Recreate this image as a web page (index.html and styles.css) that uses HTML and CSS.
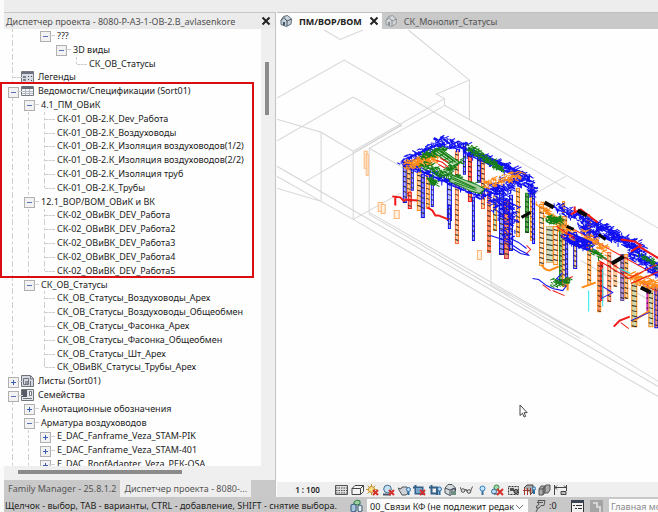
FILE: index.html
```html
<!DOCTYPE html>
<html lang="ru">
<head>
  <meta charset="UTF-8" />
  <meta name="viewport" content="width=device-width, initial-scale=1" />
  <title>Диспетчер проекта</title>
  <link rel="stylesheet" href="styles.css">
</head>
<body>
  <div class="ribbon"></div>

  <div class="workspace">
    <aside class="browser">
      <header class="panel-title">
        <h1>Диспетчер проекта - 8080-Р-АЗ-1-ОВ-2.В_avlasenkore</h1>
        <button class="close" aria-label="Закрыть панель"><svg viewBox="0 0 10 10"><path d="M1.5 1.5l7 7M8.500 1.500l-7 7"/></svg></button>
      </header>

      <div class="panel-body">
        <div class="tree-view">
          <ul class="tree">
            <li><i class="v"></i><i></i><button class="box minus" aria-label="Свернуть"></button><span>???</span></li>
            <li><i class="v"></i><i></i><i></i><button class="box minus" aria-label="Свернуть"></button><span>3D виды</span></li>
            <li><i class="v"></i><i></i><i></i><i></i><i class="end"></i><span>СК_ОВ_Статусы</span></li>
            <li><i class="tee"></i><svg class="kind" viewBox="0 0 13 12"><path d="M.5.5h12v11H.5z" fill="#d9dce2" stroke="#777b83"/><path d="M1 1h11v2H1z" fill="#6d7280"/><path d="M2 5h3v2H2zM2 8h3v2H2z" fill="#7b8290"/><path d="M7 5h1v1H7zM10 5h1v1h-1zM7 8h1v1H7zM10 9h1v1h-1z" fill="#454b5c"/></svg><span>Легенды</span></li>
            <li class="marked">
              <ul>
                <li><button class="box minus" aria-label="Свернуть"></button><svg class="kind" viewBox="0 0 13 12"><path d="M.5 1.500h12v9H.5z" fill="#f6f6f8" stroke="#777b83"/><path d="M1 1h11v3H1z" fill="#666b78"/><path d="M4.500 4v6M8.500 4v6M1 6.500h11M1 8.500h11" stroke="#b4b8c2" fill="none"/></svg><span>Ведомости/Спецификации (Sort01)</span></li>
                <li><i class="v"></i><button class="box minus" aria-label="Свернуть"></button><span>4.1_ПМ_ОВиК</span></li>
                <li><i class="v"></i><i class="v"></i><i class="tee"></i><span>СК-01_ОВ-2.К_Dev_Работа</span></li>
                <li><i class="v"></i><i class="v"></i><i class="tee"></i><span>СК-01_ОВ-2.К_Воздуховоды</span></li>
                <li><i class="v"></i><i class="v"></i><i class="tee"></i><span>СК-01_ОВ-2.К_Изоляция воздуховодов(1/2)</span></li>
                <li><i class="v"></i><i class="v"></i><i class="tee"></i><span>СК-01_ОВ-2.К_Изоляция воздуховодов(2/2)</span></li>
                <li><i class="v"></i><i class="v"></i><i class="tee"></i><span>СК-01_ОВ-2.К_Изоляция труб</span></li>
                <li><i class="v"></i><i class="v"></i><i class="end"></i><span>СК-01_ОВ-2.К_Трубы</span></li>
                <li><i class="v"></i><button class="box minus" aria-label="Свернуть"></button><span>12.1_ВОР/ВОМ_ОВиК и ВК</span></li>
                <li><i class="v"></i><i class="v"></i><i class="tee"></i><span>СК-02_ОВиВК_DEV_Работа</span></li>
                <li><i class="v"></i><i class="v"></i><i class="tee"></i><span>СК-02_ОВиВК_DEV_Работа2</span></li>
                <li><i class="v"></i><i class="v"></i><i class="tee"></i><span>СК-02_ОВиВК_DEV_Работа3</span></li>
                <li><i class="v"></i><i class="v"></i><i class="tee"></i><span>СК-02_ОВиВК_DEV_Работа4</span></li>
                <li><i class="v"></i><i class="v"></i><i class="end"></i><span>СК-02_ОВиВК_DEV_Работа5</span></li>
              </ul>
            </li>
            <li><i class="v"></i><button class="box minus" aria-label="Свернуть"></button><span>СК_ОВ_Статусы</span></li>
            <li><i class="v"></i><i></i><i class="tee"></i><span>СК_ОВ_Статусы_Воздуховоды_Арех</span></li>
            <li><i class="v"></i><i></i><i class="tee"></i><span>СК_ОВ_Статусы_Воздуховоды_Общеобмен</span></li>
            <li><i class="v"></i><i></i><i class="tee"></i><span>СК_ОВ_Статусы_Фасонка_Арех</span></li>
            <li><i class="v"></i><i></i><i class="tee"></i><span>СК_ОВ_Статусы_Фасонка_Общеобмен</span></li>
            <li><i class="v"></i><i></i><i class="tee"></i><span>СК_ОВ_Статусы_Шт_Арех</span></li>
            <li><i class="v"></i><i></i><i class="end"></i><span>СК_ОВиВК_Статусы_Трубы_Арех</span></li>
            <li><button class="box plus" aria-label="Развернуть"></button><svg class="kind" viewBox="0 0 13 12"><path d="M.5.5h9l3 3v8H.5z" fill="#d5d8de" stroke="#70747d"/><path d="M2.500 3.500h5v6h-5zM9.500 1v3h3M9.500 6v5" fill="none" stroke="#70747d"/><path d="M4 6h3v3H4z" fill="#8d929e"/></svg><span>Листы (Sort01)</span></li>
            <li><button class="box minus" aria-label="Свернуть"></button><svg class="kind" viewBox="0 0 13 12"><path d="M.5.5h12v11H.5z" fill="#e4e5e9" stroke="#70747d"/><path d="M1 1h5v7H1z" fill="#555a66"/><path d="M8.500 2.500h2v4h-2zM2 9.500h9" fill="#fff" stroke="#70747d"/></svg><span>Семейства</span></li>
            <li><i class="v"></i><button class="box plus" aria-label="Развернуть"></button><span>Аннотационные обозначения</span></li>
            <li><i class="v"></i><button class="box minus" aria-label="Свернуть"></button><span>Арматура воздуховодов</span></li>
            <li><i class="v"></i><i class="v"></i><button class="box plus" aria-label="Развернуть"></button><span>E_DAC_Fanframe_Veza_STAM-PIK</span></li>
            <li><i class="v"></i><i class="v"></i><button class="box plus" aria-label="Развернуть"></button><span>E_DAC_Fanframe_Veza_STAM-401</span></li>
            <li><i class="v"></i><i class="v"></i><button class="box plus" aria-label="Развернуть"></button><span>E_DAC_RoofAdapter_Veza_РЕК-OSA</span></li>
          </ul>
        </div>
        <div class="scroll-y"><div class="thumb"></div></div>
      </div>
      <div class="scroll-x"><div class="thumb"></div></div>

      <nav class="panel-tabs">
        <button>Family Manager - 25.8.1.2</button>
        <button class="active">Диспетчер проекта - 8080-...</button>
      </nav>
    </aside>

    <main class="views">
      <nav class="view-tabs">
        <div class="view-tab active">
          <svg class="home" viewBox="0 0 12 12"><path d="M1 5.500L3.500 1.500 7.500.5l4 3.500-.5 5-4.500 2.500L1 9.500z" fill="#c9d3dc" stroke="#5a6a78"/><path d="M1 5.500l3-3 3 3.500 4.500-2M7 6v5" fill="none" stroke="#46545f"/><path d="M3 7h2v3.500l-2-.8z" fill="#3f5568"/></svg>
          <button>ПМ/ВОР/ВОМ</button>
          <button class="close" aria-label="Закрыть вид"><svg viewBox="0 0 10 10"><path d="M1.500 1.500l7 7M8.500 1.500l-7 7"/></svg></button>
        </div>
        <div class="view-tab">
          <svg class="home faded" viewBox="0 0 12 12"><path d="M1 5.500L3.500 1.500 7.500.5l4 3.500-.5 5-4.500 2.500L1 9.500z" fill="#dde1e5" stroke="#5a6a78"/><path d="M1 5.500l3-3 3 3.500 4.500-2M7 6v5" fill="none" stroke="#46545f"/><path d="M3 7h2v3.500l-2-.8z" fill="#3f5568"/></svg>
          <button>СК_Монолит_Статусы</button>
        </div>
      </nav>

      <div class="canvas">
        <svg id="model" viewBox="277 29 381 452" preserveAspectRatio="xMinYMin slice">
          <g class="outline">
            <path d="M324 30l16 9.500L363 30M277 98l67-38 221 128M408 30l61 50v39M469 80l-33 14 8 4.500v6.500l214 123"/>
            <path d="M444 98.500L353 151M445 105l-76 43v66M401 125l-97 57M277 140.500L353 97l48 27.500v2"/>
            <path d="M277 119l44 13v69l-44-13M321 132l32 19v68M277 166l381 220M277 176l76 43 305 177M353 219l47-26M369 148l40 23"/>
            <path d="M369 212l213 122 76 47M369 214l211 124M490.500 250v34l92 51M565 176l-30 17M401 125l-48 28M580 260l78 45"/>
          </g>
        </svg>
        <svg class="cursor" viewBox="0 0 9 14"><path d="M1 1v10.500l2.400-2.200 1.700 3.700 1.600-.7L5 8.700h3.200z"/></svg>
      </div>

      <div class="view-controls">
        <button class="scale">1 : 100</button>
        <div class="icons">
          <button aria-label="Уровень детализации"><svg viewBox="0 0 13 12"><path d="M.5 1.500h12v9H.5z" fill="#ddd" stroke="#555"/><path d="M1 4h11M1 6.500h11M1 9h11" stroke="#555" stroke-dasharray="1.500 1" fill="none"/></svg></button>
          <button aria-label="Визуальный стиль"><svg viewBox="0 0 13 12"><path d="M1 4.500L4 1.500h8.500v6l-3 3H1z" fill="#f4f4f4" stroke="#444"/><path d="M1 4.500h8.500v6M9.500 4.500l3-3" fill="none" stroke="#444"/></svg></button>
          <button aria-label="Траектория солнца"><svg viewBox="0 0 13 12"><path d="M5.500 0v11M0 5.500h11M1.600 1.600l8 8M9.400 1.600l-8 8" stroke="#c9962e"/><circle cx="5.500" cy="5.500" r="3" fill="#ffe08a" stroke="#b98522"/><path class="off" d="M7 6l5 5M12 6l-5 5"/></svg></button>
          <button aria-label="Тени"><svg viewBox="0 0 13 12"><path d="M1 10.500h8" stroke="#456" stroke-width="2"/><circle cx="5.500" cy="5" r="3.800" fill="#c6e1f2" stroke="#3b6f96"/><path class="off" d="M7 6l5 5M12 6l-5 5"/></svg></button>
          <button aria-label="Визуализация"><svg viewBox="0 0 13 12"><path d="M0 4l3 1 1-2h5l1 2v4l-2 2H4L1 6z" fill="#ccd2d6" stroke="#555"/><circle cx="10.500" cy="5.500" r="2" fill="#b9dcf5" stroke="#2c6ca5"/><path d="M10.500 8v3" stroke="#2c6ca5" stroke-width="2"/></svg></button>
          <button aria-label="Обрезать вид"><svg viewBox="0 0 13 12"><path d="M0 3.500h9.500V11M2.500 1v8.500H12" fill="none" stroke="#345f86" stroke-width="2"/><path d="M3 4h6v5H3z" fill="#77a7cd"/><path class="off" d="M7 6l5 5M12 6l-5 5"/></svg></button>
          <button aria-label="Показать область подрезки"><svg viewBox="0 0 13 12"><path d="M0 3.500h8V11M2.500 1v8.500H8" fill="none" stroke="#345f86" stroke-width="2"/><circle cx="10.500" cy="5" r="2" fill="#b9dcf5" stroke="#2c6ca5"/><path d="M10.500 7v4" stroke="#2c6ca5" stroke-width="2"/></svg></button>
          <button aria-label="Заблокировать 3D вид"><svg viewBox="0 0 13 12"><path d="M1 4l3-3.500h4L11.500 4v4L6 11.500 1 9z" fill="#d4dadd" stroke="#4b575e"/><path d="M1 4l5 2 5-2M6 6v5" fill="none" stroke="#4b575e"/><path d="M7 7h5v4H7z" fill="#6f8d80"/><path d="M8 7V5h3v2" fill="none" stroke="#445"/></svg></button>
          <button aria-label="Временное скрытие"><svg viewBox="0 0 13 12"><path d="M0 3l2 4.500h2.500L6 5l1.500 3.500H10l2.500-6" fill="none" stroke="#555"/><circle cx="3" cy="6.500" r="1.800" fill="#ddd" stroke="#555"/><circle cx="9" cy="7.500" r="1.800" fill="#ddd" stroke="#555"/></svg></button>
          <button aria-label="Показать скрытые элементы"><svg viewBox="0 0 13 12"><circle cx="6.500" cy="4.500" r="2.500" fill="#c7e5fa" stroke="#2c7bbd"/><path d="M6.500 7v4" stroke="#3e6c96" stroke-width="2"/></svg></button>
          <button aria-label="Свойства временного вида"><svg viewBox="0 0 13 12"><circle cx="5.500" cy="3.500" r="2.500" fill="#a8d8b0" stroke="#2d8a43"/><circle cx="3" cy="7.500" r="2.500" fill="#bcd9ee" stroke="#2e6d9c"/><path d="M3 10h5" stroke="#345"/><path class="off" d="M6 5l6 6M12 5l-6 6"/></svg></button>
          <button aria-label="Аналитическая модель"><svg viewBox="0 0 13 12"><path d="M1.500 2.500h10v8h-10z" fill="#ddd" stroke="#333" stroke-dasharray="2 1"/><path d="M3 4h4v3H3z" fill="#555"/><circle cx="9" cy="7.500" r="2" fill="#888" stroke="#222"/></svg></button>
          <button aria-label="Наборы смещения"><svg viewBox="0 0 13 12"><path d="M1 4l3-3h6v7l-2 2" fill="#aaa" stroke="#444"/><path d="M1.500 4v7M4.500 4v7M7.500 4v7M0 6.500h8" stroke="#a13b32"/><circle cx="11" cy="4.500" r="1.600" fill="#b9dcf5" stroke="#2c6ca5"/><path d="M11 6v4" stroke="#2c6ca5" stroke-width="2"/></svg></button>
          <button aria-label="Зависимости"><svg viewBox="0 0 13 12"><path d="M1 5l2-3h4v6l-2 3H1zM6 3l2-2h4v5l-2 3H6z" fill="#ababab" stroke="#555"/><path d="M1 5h4v6M5 5l2-3" fill="none" stroke="#555"/></svg></button>
          <button aria-label="Размеры"><svg viewBox="0 0 13 12"><path d="M.5 1v10M12.500 1v6M0 3.500h13M1 3.500l2-2M1 3.500l2 2M12 3.500l-2-2" fill="none" stroke="#444"/><path d="M7 7.500h5v3H7z" fill="#bbb" stroke="#444"/></svg></button>
        </div>
      </div>
    </main>
  </div>

  <footer class="status">
    <p>Щелчок - выбор, TAB - варианты, CTRL - добавление, SHIFT - снятие выбора.</p>
    <svg class="sets" viewBox="0 0 13 14"><path d="M4 3l3-2 3 1v3l-3 1-3-1z" fill="#9ed0a4" stroke="#2f7d42"/><path d="M1 6l3-1 2 1v6l-3 1-2-1z" fill="#a7c4dc" stroke="#33597a"/><path d="M8 7l2-1 2 1v5l-2 1-2-1z" fill="#e6ecf0" stroke="#33597a"/></svg>
    <select class="workset" aria-label="Рабочий набор"><option>00_Связи КФ (не подлежит редак</option></select>
    <svg class="edit" viewBox="0 0 13 14"><path d="M4 1.500h7l-1 5H7L5 9H2.500v-2L5 5.500zM4 9l-2 4M3 3.500h6" fill="none" stroke="#555"/></svg>
    <span class="count">:0</span>
    <svg class="list" viewBox="0 0 13 14"><path d="M.5 1.500h12v12H.5z" fill="#f2f2f2" stroke="#333"/><path d="M0 1h13v3H0z" fill="#3a4450"/><path d="M2 6.500h2M5 6.500h6M4 9.500h2M7 9.500h4" stroke="#333"/></svg>
    <svg class="list pale" viewBox="0 0 13 14"><path d="M0 1h13v13H0z" fill="#a5a5a5"/><path d="M3 4h4v4h3v5" fill="none" stroke="#d6d6d6" stroke-width="2"/></svg>
    <input class="option" type="text" value="Главная модель" aria-label="Вариант конструкции" disabled>
  </footer>

  <script src="script.js"></script>
</body>
</html>
```
FILE: styles.css
```css
* {
  box-sizing: border-box;
}
body {
  margin: 0;
  height: 100vh;
  overflow: hidden;
  display: grid;
  grid-template-rows: 12px 1fr 15px;
  background: #fbfbfb;
  font-family: "Noto Sans", "Open Sans", sans-serif;
  font-size: 9px;
  color: #222;
}
button,
select,
input {
  font: inherit;
  color: inherit;
  border: 0;
  padding: 0;
  background: none;
}
ul {
  list-style: none;
  margin: 0;
  padding: 0;
}
svg {
  display: block;
  flex: none;
}

.ribbon {
  margin-left: 4px;
  background: #ededed;
}
.workspace {
  display: grid;
  grid-template-columns: 276px minmax(0, 1fr);
  min-height: 0;
}

/* project browser */
.browser {
  display: grid;
  grid-template-columns: minmax(0, 1fr);
  grid-template-rows: 17px 1fr 14px 17px;
  min-height: 0;
  border-right: 1px solid #c4c4c4;
}
.panel-title {
  display: flex;
  align-items: center;
  justify-content: space-between;
  margin-left: 4px;
  padding: 0 4px 0 2px;
  background: #ebebeb;
  border-top: 1px solid #c8c8c8;
}
.panel-title h1 {
  margin: 0;
  font-size: 9px;
  font-weight: 400;
  color: #505050;
  white-space: nowrap;
}
.close {
  flex: none;
  width: 10px;
  height: 10px;
}
.close path {
  fill: none;
  stroke: #222;
  stroke-width: 2;
}
.panel-body {
  display: grid;
  grid-template-columns: minmax(0, 1fr) 14px;
  min-height: 0;
}
.tree-view {
  overflow: hidden;
  background: #fefefe;
}
.tree {
  display: flex;
  flex-direction: column;
  height: calc(100% + 5px);
}
.tree li {
  flex: 1;
  min-height: 0;
  display: flex;
  align-items: center;
  padding-left: 4px;
  white-space: nowrap;
}
.tree li span {
  margin-left: 5px;
  line-height: 14px;
}
.tree .marked {
  flex: 14;
  position: relative;
  display: block;
  padding: 0;
}
.marked ul {
  display: flex;
  flex-direction: column;
  height: 100%;
}
.marked::after {
  content: "";
  position: absolute;
  inset: -2px 7px 0 0;
  border: 2px solid #d90e12;
  pointer-events: none;
}
.tree i,
.box {
  position: relative;
  width: 16px;
  flex: none;
}
.tree i {
  align-self: stretch;
}
.v::before,
.tee::before,
.end::before {
  content: "";
  position: absolute;
  left: 8px;
  top: 0;
  bottom: 0;
  border-left: 1px dashed #cfcfcf;
}
.end::before {
  bottom: 50%;
}
.tee::after,
.end::after,
.box::after {
  content: "";
  position: absolute;
  left: 9px;
  right: -3px;
  top: 50%;
  border-top: 1px dashed #cfcfcf;
}
.box {
  height: 9px;
}
.box::after {
  left: 13px;
  top: 4px;
}
.box::before {
  content: "";
  position: absolute;
  left: 4px;
  top: 0;
  width: 9px;
  height: 9px;
  border: 1px solid #b0b0b0;
  background: linear-gradient(#5873b5, #5873b5) center / 5px 1px no-repeat, #f2f2f2;
}
.plus::before {
  background: linear-gradient(#3f5db0, #3f5db0) center / 5px 1px no-repeat,
    linear-gradient(#3f5db0, #3f5db0) center / 1px 5px no-repeat, #f2f2f2;
}
.kind {
  width: 13px;
  height: 12px;
  margin-left: 1px;
}
.tree .kind + span {
  margin-left: 4px;
}
.scroll-y,
.scroll-x {
  background: #efefef;
}
.scroll-y .thumb {
  width: 4px;
  height: 53px;
  margin: 33px 0 0 4px;
  background: #8b8b8b;
}
.scroll-x {
  margin-left: 4px;
}
.scroll-x .thumb {
  width: 164px;
  height: 4px;
  margin: 4px 0 0 14px;
  background: #8b8b8b;
}
.panel-tabs {
  display: flex;
  margin-left: 4px;
  background: #c9c9c9;
}
.panel-tabs button {
  padding: 0 4px;
  color: #555;
  white-space: nowrap;
}
.panel-tabs .active {
  background: #eee;
}

/* view area */
.views {
  display: grid;
  grid-template-columns: minmax(0, 1fr);
  grid-template-rows: 17px 1fr 15px;
  min-height: 0;
  padding-left: 1px;
}
.view-tabs {
  display: flex;
  background: #c9c9c9;
  border-top: 1px solid #c0c0c0;
}
.view-tab {
  display: flex;
  align-items: center;
  gap: 7px;
  padding: 0 3px;
  color: #555;
}
.view-tab.active {
  background: #fdfdfd;
  color: #222;
  font-weight: 700;
}
.home {
  width: 12px;
  height: 12px;
}
.faded {
  opacity: .5;
}
.canvas {
  position: relative;
  overflow: hidden;
  background: #fefefe;
}
#model {
  width: 100%;
  height: 100%;
}
.outline {
  fill: none;
  stroke: #d6d6d6;
  stroke-width: 1;
}
.cursor {
  position: absolute;
  left: 242px;
  top: 375px;
  width: 9px;
  height: 14px;
  fill: #fff;
  stroke: #444;
}
.view-controls {
  display: flex;
  align-items: center;
  background: #efefef;
}
.scale {
  width: 58px;
  padding-left: 3px;
  font-size: 8px;
  font-weight: 600;
}
.icons {
  display: flex;
  justify-content: space-between;
  width: 232px;
}
.icons svg {
  width: 13px;
  height: 12px;
}
.off {
  stroke: #d3302b;
  stroke-width: 2;
}

/* status bar */
.status {
  display: flex;
  align-items: flex-start;
  overflow: hidden;
  margin-left: 4px;
  padding-top: 2px;
  background: #c8c8c8;
  line-height: 14px;
  white-space: nowrap;
}
.status p {
  flex: none;
  width: 346px;
  margin: 0;
  padding-left: 1px;
}
.status svg {
  width: 13px;
  height: 14px;
}
.workset {
  flex: none;
  width: 161px;
  height: 15px;
  margin: 0 6px 0 4px;
  padding: 0 12px 0 3px;
  appearance: none;
  background: linear-gradient(45deg, transparent 46%, #777 46% 58%, transparent 58%) 149px 6px / 4px 4px no-repeat,
    linear-gradient(-45deg, transparent 46%, #777 46% 58%, transparent 58%) 152px 6px / 4px 4px no-repeat, #fcfcfc;
}
.count {
  flex: none;
  width: 22px;
  margin-left: 2px;
}
.status .list {
  margin-right: 6px;
}
.option {
  flex: 1;
  min-width: 0;
  height: 15px;
  padding-left: 2px;
  background: #fcfcfc;
  color: #8a8a8a;
}
```
FILE: script.js
```js
const svg = document.getElementById("model");
const blue = "#1010f0", green = "#168016", orange = "#ff8c1a", red = "#f01818", peach = "#ffd0a0", cyan = "#20e8f0";

let seed = 7;
function rnd() {
  seed = (seed * 16807) % 2147483647;
  return seed / 2147483647;
}

function line(d, color, width, fill) {
  const p = document.createElementNS("http://www.w3.org/2000/svg", "path");
  p.setAttribute("d", d);
  p.setAttribute("stroke", color);
  p.setAttribute("stroke-width", width || 1);
  p.setAttribute("fill", fill || "none");
  svg.appendChild(p);
}

// vertical duct with flange marks
function riser(x, top, bottom, w, fill, edge) {
  line(`M${x} ${top}h${w}V${bottom}h${-w}z`, edge, 1, fill);
  let marks = "";
  for (let y = top + 3; y < bottom; y += 5) marks += `M${x} ${y}l${w} 1`;
  line(marks, "#222", 1);
}

// run of small axonometric fittings between two points
function run(x1, y1, x2, y2, spread, count, color, width) {
  let d = "";
  for (let n = 0; n < count; n++) {
    const t = n / count;
    const x = x1 + (x2 - x1) * t + (rnd() - .5) * spread - 1;
    const y = y1 + (y2 - y1) * t + (rnd() - .5) * spread;
    const l = 2 + rnd() * 3;
    const k = Math.floor(rnd() * 5);
    const dx = k === 3 ? 0 : l, dy = k === 3 ? l * .8 : k === 2 ? -l * .5 : l * .5;
    d += `M${x.toFixed(1)} ${y.toFixed(1)}l${dx.toFixed(1)} ${dy.toFixed(1)}`;
  }
  line(d, color, width);
}

// free standing shafts
[[364, 151, 3, 17], [366, 154, 2, 21], [378, 202, 4, 9], [381, 204, 4, 9], [394, 210, 5, 8], [477, 250, 4, 9]]
  .forEach(([x, y, w, h]) => line(`M${x} ${y}h${w}v${h}h${-w}z`, "#ffb778", 1, "#fff0e0"));

// x, top, bottom, width, fill, edge
[
  [403, 163, 202, 3, "#a9a9f5", blue], [407, 165, 196, 3, peach, orange], [411, 164, 190, 2, "#c9c9ff", blue],
  [408, 192, 208, 3, "#ffa080", red], [417, 172, 210, 4, peach, orange], [421, 174, 217, 3, "#8888ee", blue],
  [426, 175, 208, 3, peach, orange], [431, 176, 206, 2, "#ddf", blue], [447, 181, 220, 4, "#bbf", blue],
  [448, 205, 228, 2, "#bbf", blue], [455, 151, 243, 3, peach, "#f86a3c"], [463, 143, 174, 2, "#ccf", blue],
  [468, 153, 201, 3, "#ff9a70", red], [472, 197, 240, 2, "#aaf", blue], [477, 157, 182, 3, "#aaf", blue],
  [481, 160, 208, 3, peach, "#f86a3c"], [487, 192, 252, 3, "#ff9068", "#f86a3c"], [493, 196, 230, 3, "#cfe6bb", orange],
  [499, 190, 254, 4, "#99f", blue], [504, 200, 258, 4, "#ff9068", "#c03a60"], [509, 195, 250, 3, "#aaf", blue],
  [516, 188, 236, 3, peach, orange], [525, 193, 232, 3, "#62ad55", green], [530, 188, 240, 2, peach, orange],
  [532, 190, 243, 2, "#aaf", blue], [539, 204, 265, 4, "#ffe9d2", orange], [546, 226, 262, 6, "#cfe0c2", "#e0b070"],
  [553, 226, 264, 4, "#ffe9d2", orange], [559, 222, 284, 3, "#9bbf84", green], [562, 216, 286, 4, peach, orange],
  [565, 240, 280, 2, "#aaf", blue], [573, 232, 268, 3, peach, blue], [587, 216, 284, 3, peach, orange],
  [597, 262, 311, 3, "#ff9068", orange], [600, 262, 300, 2, "#ff5030", red], [607, 252, 301, 3, peach, "#f86a3c"],
  [613, 262, 286, 3, peach, "#ffb778"], [620, 254, 300, 3, "#b69ad0", "#6a4a9a"], [624, 254, 298, 3, peach, orange],
  [631, 282, 326, 5, "#cfd8a8", orange], [648, 284, 326, 4, "#cfe0c2", orange], [654, 286, 327, 3, "#ff9068", blue],
  [562, 201, 212, 2, peach, orange], [587, 214, 226, 2, peach, orange], [646, 284, 310, 1, peach, "#d030c0"]
].forEach(r => riser(...r));

// return pipes along the lower level
line("M392 196l8 1 4 4M395 196v9M404 199l13 1M427 207l5 3 3 5 3 0 10 4", red, 2);
line("M490 235l12 4 6 3 12 8 8 4M508 237l10 5 8 6M512 248l8 5 9 2", blue, 1);
line("M526 245l4 4-4 4M620 322l8 6", red, 1);
line("M613 326l6-6 10-4", red, 2);
line("M532 278l6 1 8 6 6 3 10 2 4-5M562 272l-6 6 8 4", blue, 1);
line("M542 284l8 6M552 290l12 5M560 282l12-6", red, 1);
line("M541 264q2 5 8 6l9-4M567 278v12M581 287l14-5M633 320l16-10", orange, 2);
line("M560 235l30 14 36 24 30 18M566 225l90 50", red, 1);
line("M588 290v21M602 268v38M580 212l10 6M618 268l12 5", cyan, 1);
line("M600 298l12-6-10-6M630 320l18-8", blue, 1);

// first block
line("M402 160l37-17 4 3-37 17zM404 164l72 31 7-3M466 149l60 26-4 4-58-26zM408 158l32-14M406 161l74 32M470 149l54 24", blue, 1);
run(401, 160, 440, 142, 6, 70, blue, 1);
run(436, 141, 465, 146, 9, 100, blue, 1);
run(466, 150, 526, 176, 7, 220, blue, 1);
run(403, 162, 480, 194, 6, 170, blue, 1);
run(478, 194, 528, 178, 10, 180, blue, 1);
run(490, 190, 510, 215, 18, 130, blue, 1);
run(526, 178, 533, 194, 7, 60, blue, 1);
run(500, 180, 510, 242, 14, 90, blue, 1);
run(408, 164, 436, 156, 9, 180, orange, 1);
run(422, 156, 444, 148, 6, 80, green, 1);
run(421, 163, 482, 190, 7, 180, green, 1);
run(446, 169, 460, 160, 5, 50, green, 1);
run(468, 147, 502, 169, 6, 130, green, 1);
run(428, 179, 436, 182, 5, 34, green, 1);
run(484, 184, 520, 174, 8, 90, orange, 1);
// plenum over the plant room
line("M434 152l7-3 18 13-7 4z", green, 1, "#c3dfc0");
line("M436 151l17 12M438 150l17 12M440 150l16 12M444 153l-5 3M449 157l-6 3M454 160l-6 3", green, 1);
line("M452 175l26 10 6 4-5 4-8-2-22-10z", green, 1, "#a8d0a4");
line("M452 177l24 11M454 182l22 8M450 178l24 10", green, 1);
line("M436 160l6 2 6 5M438 164l7 4M440 158l8 4", red, 1);

// second block
run(555, 206, 600, 226, 8, 140, blue, 1);
run(565, 236, 590, 246, 9, 170, blue, 1);
run(580, 224, 596, 240, 8, 90, blue, 1);
run(598, 226, 640, 248, 10, 240, blue, 1);
run(630, 250, 660, 272, 11, 190, blue, 1);
run(539, 204, 573, 236, 8, 120, orange, 1);
run(582, 232, 606, 252, 8, 70, orange, 1);
run(630, 276, 656, 284, 9, 130, orange, 1);
run(546, 219, 560, 219, 6, 80, green, 1);
run(590, 248, 602, 256, 6, 36, green, 1);
run(640, 254, 656, 266, 5, 34, green, 1);
run(553, 282, 568, 280, 7, 40, green, 1);
line("M568 232l20 9-8 5-14-8zM600 226l18 8-8 6-16-8zM622 242l14 7-8 5M566 240l14 7", blue, 2);
line("M570 214l10-5 17 13M574 206v6M620 239l14 2 6 4-10 6M638 246l20 12", red, 2);
line("M556 226l18 12M598 260l30 18 28-14M630 283l28-12", red, 1);
line("M544 202l9 5M577 210l9 5M611 263l12-7M640 287l10 5", "#080808", 4);
line("M521 217l9-5M598 234l7 5M566 226l7 3", "#080808", 3);
```
